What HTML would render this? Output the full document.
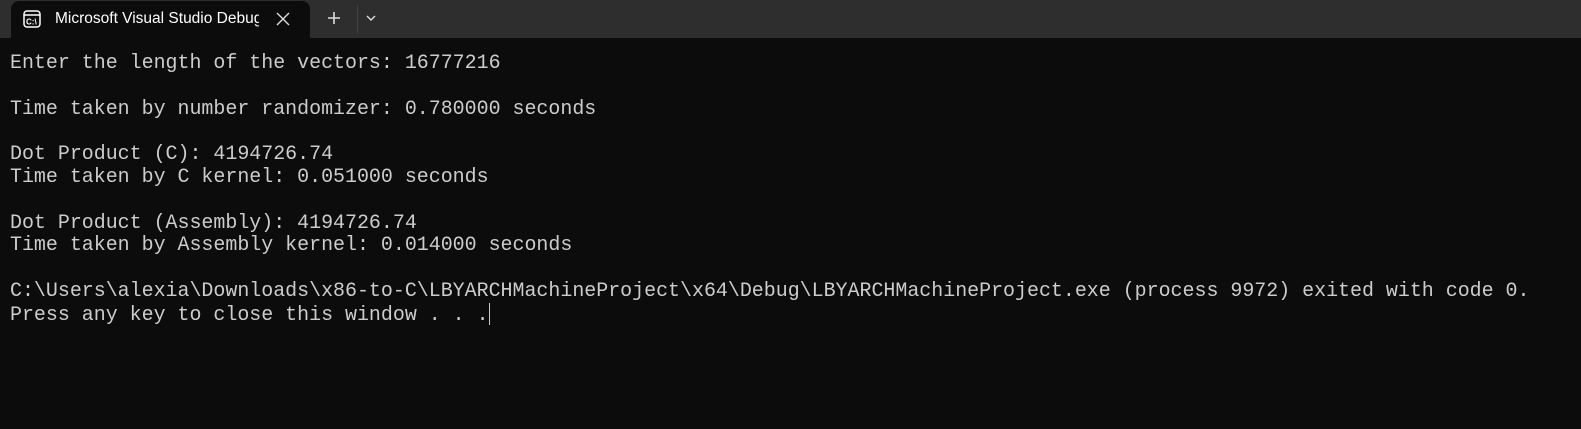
<!DOCTYPE html>
<html><head><meta charset="utf-8"><style>
html,body{margin:0;padding:0;}
body{width:1581px;height:429px;background:#0c0c0c;overflow:hidden;position:relative;font-family:"Liberation Sans",sans-serif;}
.bar{position:absolute;left:0;top:0;width:1581px;height:38px;background:#2e2e2e;}
.tab{position:absolute;left:11px;top:1px;width:299px;height:38px;background:#0c0c0c;border-radius:8px 8px 0 0;}
.title{position:absolute;left:55px;top:10px;color:#fff;font-size:15.5px;white-space:nowrap;width:204px;overflow:hidden;}
.term{position:absolute;left:10px;top:52px;color:#cccccc;font-family:"Liberation Mono",monospace;font-size:19.95px;line-height:22.8px;white-space:pre;}
.cur{display:inline-block;width:1px;height:22px;background:#ccc;vertical-align:-5px;}
</style></head><body>
<div class="bar"></div>
<div class="tab">
<svg style="position:absolute;left:12px;top:9px" width="18" height="18" viewBox="0 0 18 18"><rect x="1" y="1" width="16" height="16" rx="3" fill="none" stroke="#fff" stroke-width="1.5"/><line x1="1" y1="5" x2="17" y2="5" stroke="#fff" stroke-width="1.5"/><text x="3" y="14.5" font-size="8" fill="#fff" font-family="Liberation Sans" font-weight="bold">C:\</text></svg>
</div>
<div class="title">Microsoft Visual Studio Debug Console</div>
<svg style="position:absolute;left:276px;top:12px" width="14" height="14" viewBox="0 0 14 14"><path d="M1 1L13 13M13 1L1 13" stroke="#ddd" stroke-width="1.4"/></svg>
<svg style="position:absolute;left:327px;top:11px" width="14" height="14" viewBox="0 0 14 14"><path d="M7 1V13M1 7H13" stroke="#ddd" stroke-width="1.6"/></svg>
<div style="position:absolute;left:357px;top:5px;width:1px;height:28px;background:#444"></div>
<svg style="position:absolute;left:366px;top:15px" width="10" height="7" viewBox="0 0 10 7"><path d="M1 1L5 5L9 1" stroke="#ddd" stroke-width="1.4" fill="none"/></svg>
<div class="term">Enter the length of the vectors: 16777216

Time taken by number randomizer: 0.780000 seconds

Dot Product (C): 4194726.74
Time taken by C kernel: 0.051000 seconds

Dot Product (Assembly): 4194726.74
Time taken by Assembly kernel: 0.014000 seconds

C:\Users\alexia\Downloads\x86-to-C\LBYARCHMachineProject\x64\Debug\LBYARCHMachineProject.exe (process 9972) exited with code 0.
Press any key to close this window . . .<span class="cur"></span></div>
</body></html>
